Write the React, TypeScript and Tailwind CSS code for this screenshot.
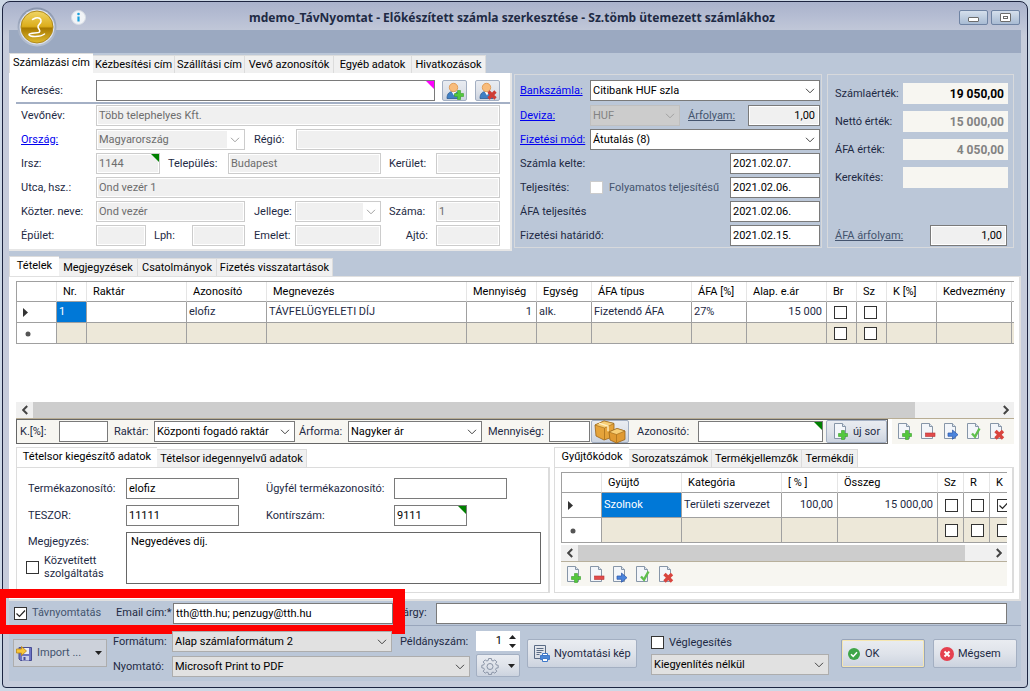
import { useState, type InputHTMLAttributes, type ReactNode } from 'react';
import clsx from 'clsx';

type DocKind = 'plus' | 'minus' | 'arrow' | 'check' | 'cross';

const docActions: { kind: DocKind; title: string }[] = [
  { kind: 'plus', title: 'Új sor' },
  { kind: 'minus', title: 'Sor törlése' },
  { kind: 'arrow', title: 'Másolás' },
  { kind: 'check', title: 'Mentés' },
  { kind: 'cross', title: 'Elvetés' },
];

function DocIcon({ kind }: { kind: DocKind }) {
  return (
    <svg width="16" height="17" viewBox="0 0 16 17" className="shrink-0">
      <path d="M1.500 .5h8l3 3v12h-11z" fill="#f3f6fa" stroke="#8796a8" />
      <path d="M9.500 .5v3h3" fill="#dfe6ee" stroke="#8796a8" />
      {kind === 'plus' && (
        <path d="M8.500 7.500h3v3h3v3h-3v3h-3v-3h-3v-3h3z" fill="#52c83c" stroke="#3aa02b" strokeWidth=".6" />
      )}
      {kind === 'minus' && <rect x="5.500" y="10" width="9.500" height="3.500" fill="#e14b4b" stroke="#b83232" strokeWidth=".6" />}
      {kind === 'arrow' && (
        <path d="M5 10h4.500V7l5.500 4.700-5.500 4.600v-3H5z" fill="#4b84dc" stroke="#2a55a8" strokeWidth=".7" />
      )}
      {kind === 'check' && <path d="M6 10.500l3 3.200L13.500 5.500" fill="none" stroke="#5fbf4d" strokeWidth="2.400" />}
      {kind === 'cross' && (
        <path d="M6.500 8l7.500 7.500M14 8l-7.500 7.500" stroke="#d9443e" strokeWidth="3.400" fill="none" />
      )}
    </svg>
  );
}

function PersonIcon({ kind }: { kind: 'plus' | 'cross' }) {
  return (
    <svg width="18" height="18" viewBox="0 0 18 18">
      <path d="M1 16.500c0-5 2.500-7 6-7s7 2 7 7z" fill="#3f7fc4" stroke="#2b5c96" strokeWidth=".8" />
      <path d="M5.500 9.500l2.500 4 2.500-4z" fill="#fff" />
      <circle cx="7.500" cy="5.500" r="4.200" fill="#f8bc7c" stroke="#e09a52" strokeWidth=".9" />
      {kind === 'plus' ? (
        <path d="M11.500 8.500h3v3h3v3h-3v3h-3v-3h-3v-3h3z" fill="#52c83c" stroke="#3aa02b" strokeWidth=".6" />
      ) : (
        <path d="M9.500 9.500l7 7M16.500 9.500l-7 7" stroke="#cf3b35" strokeWidth="3.200" />
      )}
    </svg>
  );
}

function BoxesIcon() {
  return (
    <svg width="32" height="24" viewBox="0 0 32 24">
      <path d="M1 5l9-4 10 2.500v13L10 20 2 16z" fill="#e5a33a" stroke="#9a6418" strokeWidth=".8" />
      <path d="M1 5l9-4 10 2.500L10.500 8z" fill="#f8cf76" stroke="#9a6418" strokeWidth=".6" />
      <path d="M10.500 8v12" stroke="#b57a22" />
      <path d="M5 3.200l9 3v5" stroke="#fff0c4" strokeWidth="1.400" fill="none" />
      <path d="M15 12l8-3.500 8 2.500v8.500L22.500 23 16 20z" fill="#e09a32" stroke="#9a6418" strokeWidth=".8" />
      <path d="M15 12l8-3.500 8 2.500-8.500 3.500z" fill="#f8cf76" stroke="#9a6418" strokeWidth=".6" />
      <path d="M22.500 14.500V23" stroke="#b57a22" />
    </svg>
  );
}

function ImportIcon() {
  return (
    <svg width="17" height="16" viewBox="0 0 17 16" className="shrink-0">
      <path d="M3 2.500h12.500v13H4.500L3 14z" fill="#6d74c4" stroke="#474c94" />
      <rect x="5.500" y="3" width="7.500" height="6" fill="#e9ecf7" />
      <rect x="6" y="11" width="7" height="4.500" fill="#c9cde8" />
      <rect x="7.500" y="12" width="2" height="3" fill="#474c94" />
      <path d="M.5 4h5V1.500l5 4.500-5 4.500V8h-5z" fill="#f7c53a" stroke="#b98518" strokeWidth=".8" />
    </svg>
  );
}

function PrintPreviewIcon() {
  return (
    <svg width="17" height="17" viewBox="0 0 17 17" fill="none" className="shrink-0">
      <path d="M7 13.500H1.500v-13h11V8" stroke="#5a6b85" />
      <path d="M3.500 3.500h7M3.500 5.500h7M3.500 7.500h5M3.500 9.500h3" stroke="#5a6b85" />
      <path d="M9.500 8.500h5v3h-5z" fill="#fff" stroke="#3f78c9" />
      <path d="M7.500 10.500h9v4h-9z" fill="#4b86d6" stroke="#3f78c9" />
      <path d="M9.500 13.500h5v3h-5z" fill="#fff" stroke="#3f78c9" />
    </svg>
  );
}

function GearIcon() {
  return (
    <svg width="18" height="18" viewBox="0 0 18 18" fill="none" stroke="#8a94a6">
      <path d="M7.600 1.500h2.800l.4 2 1.300.5 1.700-1.100 2 2-1.200 1.700.6 1.300 2 .4v2.500l-2 .4-.6 1.300 1.200 1.700-2 2-1.700-1.100-1.300.5-.4 2H7.600l-.4-2-1.300-.5-1.700 1.100-2-2 1.200-1.700-.6-1.300-2-.4V8.300l2-.4.600-1.300-1.200-1.700 2-2L5.900 4l1.300-.5z" />
      <circle cx="9" cy="9.500" r="3" />
    </svg>
  );
}

function Chevron({ className = 'stroke-[#444]' }: { className?: string }) {
  return (
    <svg width="10" height="6" viewBox="0 0 10 6" fill="none" className={className}>
      <path d="M1 .8l4 4 4-4" />
    </svg>
  );
}

function Caret({ up = false }: { up?: boolean }) {
  return (
    <svg width="7" height="4" viewBox="0 0 7 4">
      <path d={up ? 'M0 4h7L3.500 0z' : 'M0 0h7L3.500 4z'} fill="#222" />
    </svg>
  );
}

function TextBox({
  label,
  className,
  corner,
  ...rest
}: InputHTMLAttributes<HTMLInputElement> & { label?: string; corner?: 'green' | 'magenta' }) {
  const off = rest.disabled;
  return (
    <span className={clsx('relative flex h-[21px] shrink-0', className)}>
      <input
        {...rest}
        aria-label={label}
        className={clsx(
          'h-full w-full min-w-0 border px-0.5 outline-none',
          off ? 'border-[#ccc] bg-[#f0f0f0] text-[#6d6d6d] ring-1 ring-inset ring-white' : 'border-[#7a7a7a] bg-white text-black',
        )}
      />
      {corner && (
        <svg width="8" height="8" viewBox="0 0 8 8" className="absolute top-px right-px">
          <path d="M0 0h8v8z" fill={corner === 'green' ? '#008000' : '#f0f'} />
        </svg>
      )}
    </span>
  );
}

function NumberBox({ id, value }: { id: string; value: string }) {
  return (
    <input
      id={id}
      defaultValue={value}
      className="h-[21px] min-w-0 border border-[#7a7a7a] bg-[#f0f0f0] px-1 text-right text-black ring-1 ring-inset ring-white"
    />
  );
}

function Combo({
  id,
  label,
  value,
  className,
  tone = 'white',
}: {
  id?: string;
  label?: string;
  value: string;
  className?: string;
  tone?: 'white' | 'off' | 'flat' | 'blue';
}) {
  const disabled = tone === 'off' || tone === 'blue';
  return (
    <span className={clsx('relative flex h-[21px] shrink-0', className)}>
      <select
        id={id}
        aria-label={label}
        disabled={disabled}
        className={clsx(
          'h-full w-full appearance-none border pr-5 pl-0.5 outline-none',
          tone === 'white' && 'border-[#7a7a7a] bg-white text-black',
          tone === 'off' && 'border-[#ccc] bg-[#f0f0f0] text-[#6d6d6d] ring-1 ring-inset ring-white',
          tone === 'flat' && 'border-[#adadad] bg-[#e1e1e1] text-black',
          tone === 'blue' && 'border-[#bfbfbf] bg-[#ccc] text-[#838383]',
        )}
      >
        <option>{value}</option>
      </select>
      <span
        className={clsx(
          'pointer-events-none absolute inset-y-0.5 right-0.5 flex w-4 items-center justify-center',
          tone === 'off' && 'bg-white',
        )}
      >
        <Chevron className={disabled ? 'stroke-[#a0a0a0]' : 'stroke-[#444]'} />
      </span>
    </span>
  );
}

function Check({ id, label, checked = false, off = false }: { id?: string; label?: string; checked?: boolean; off?: boolean }) {
  return (
    <span className="relative inline-flex size-[13px] shrink-0">
      <input
        id={id}
        type="checkbox"
        aria-label={label}
        defaultChecked={checked}
        disabled={off}
        className={clsx('peer size-[13px] appearance-none border bg-white', off ? 'border-[#ccc]' : 'border-[#333]')}
      />
      <svg
        viewBox="0 0 13 13"
        className="pointer-events-none absolute inset-0 hidden size-[13px] peer-checked:block"
        fill="none"
        stroke="#222"
      >
        <path d="M2.500 6.500l3 3 5.500-6" strokeWidth="1.200" />
      </svg>
    </span>
  );
}

function Tabs({ items }: { items: { name: string; width: string }[] }) {
  const [active, setActive] = useState(0);
  return (
    <div role="tablist" className="flex h-5 items-end">
      {items.map((tab, i) => (
        <button
          key={tab.name}
          role="tab"
          aria-selected={i === active}
          onClick={() => setActive(i)}
          className={clsx(
            'shrink-0 whitespace-nowrap border-[#dcdcdc] text-center text-black',
            tab.width,
            i === active ? 'h-5 border-t border-l bg-white pb-0.5' : 'h-[18px] border-t border-r bg-[#f0f0f0]',
          )}
        >
          {tab.name}
        </button>
      ))}
    </div>
  );
}

function SoftButton({ className, title, children }: { className?: string; title?: string; children: ReactNode }) {
  return (
    <button
      title={title}
      className={clsx(
        'flex shrink-0 items-center rounded-[2px] border border-[#a3afc2] bg-linear-to-b from-[#e9ecf1] via-[#dfe3ea] to-[#ccd3df]',
        className,
      )}
    >
      {children}
    </button>
  );
}

function ScrollBar({ thumb }: { thumb: string }) {
  return (
    <div className="flex h-4 shrink-0 bg-[#f0f0f0]">
      <button aria-label="Balra" className="flex w-[17px] items-center justify-center">
        <Chevron className="rotate-90 stroke-[#444] stroke-2" />
      </button>
      <div className="flex-1">
        <div className={clsx('h-full bg-[#cdcdcd]', thumb)} />
      </div>
      <button aria-label="Jobbra" className="flex w-[17px] items-center justify-center">
        <Chevron className="-rotate-90 stroke-[#444] stroke-2" />
      </button>
    </div>
  );
}

function RowMark({ kind }: { kind: 'current' | 'new' }) {
  return (
    <svg width="10" height="9" viewBox="0 0 10 9" className="ml-1 block">
      {kind === 'current' ? <path d="M2 0l5 4.500L2 9z" fill="#333" /> : <circle cx="7" cy="5" r="2.500" fill="#555" />}
    </svg>
  );
}

interface Column {
  name: string;
  width?: string;
  value: string;
  right?: boolean;
  selected?: boolean;
  check?: boolean;
  checked?: boolean;
}

const itemColumns: Column[] = [
  { name: 'Nr.', width: 'w-[30px]', value: '1', selected: true },
  { name: 'Raktár', width: 'w-[100px]', value: '' },
  { name: 'Azonosító', width: 'w-[80px]', value: 'elofiz' },
  { name: 'Megnevezés', value: 'TÁVFELÜGYELETI DÍJ' },
  { name: 'Mennyiség', width: 'w-[70px]', value: '1', right: true },
  { name: 'Egység', width: 'w-[55px]', value: 'alk.' },
  { name: 'ÁFA típus', width: 'w-[100px]', value: 'Fizetendő ÁFA' },
  { name: 'ÁFA [%]', width: 'w-[55px]', value: '27%' },
  { name: 'Alap. e.ár', width: 'w-[80px]', value: '15 000', right: true },
  { name: 'Br', width: 'w-[30px]', value: '', check: true },
  { name: 'Sz', width: 'w-[30px]', value: '', check: true },
  { name: 'K [%]', width: 'w-[50px]', value: '' },
  { name: 'Kedvezmény', width: 'w-[75px]', value: '' },
  { name: '', width: 'w-[2px]', value: '' },
];

const codeColumns: Column[] = [
  { name: 'Gyüjtő', width: 'w-[80px]', value: 'Szolnok', selected: true },
  { name: 'Kategória', value: 'Területi szervezet' },
  { name: '[ % ]', width: 'w-[56px]', value: '100,00', right: true },
  { name: 'Összeg', width: 'w-[100px]', value: '15 000,00', right: true },
  { name: 'Sz', width: 'w-[26px]', value: '', check: true },
  { name: 'R', width: 'w-[26px]', value: '', check: true },
  { name: 'K', width: 'w-[17px]', value: '', check: true, checked: true },
];

function Grid({ columns, rowHeight }: { columns: Column[]; rowHeight: string }) {
  const line = 'border-r border-b border-[#a0a0a0] p-0';
  return (
    <table className="w-full table-fixed border-separate border-spacing-0 border-t border-l border-[#a0a0a0]">
      <thead>
        <tr className="h-5">
          <th className="w-10 border-r border-b border-r-[#e5e5e5] border-b-[#a0a0a0] p-0" />
          {columns.map((c) => (
            <th
              key={c.name}
              className={clsx(
                'overflow-hidden border-r border-b border-r-[#e5e5e5] border-b-[#a0a0a0] p-0 text-left font-normal whitespace-nowrap text-black last:border-r-0',
                c.width,
              )}
            >
              <span className="pl-1.5">{c.name}</span>
            </th>
          ))}
        </tr>
      </thead>
      <tbody>
        <tr className={rowHeight}>
          <td className={line}>
            <RowMark kind="current" />
          </td>
          {columns.map((c) => (
            <td
              key={c.name}
              className={clsx(
                line,
                'overflow-hidden whitespace-nowrap last:border-r-0',
                c.right && 'text-right',
                c.selected && 'bg-[#0078d7] text-white',
              )}
            >
              {c.check ? (
                <span className="flex pl-[7px]">
                  <Check label={c.name} checked={c.checked} />
                </span>
              ) : (
                <span className="pr-1 pl-0.5">{c.value}</span>
              )}
            </td>
          ))}
        </tr>
        <tr className={rowHeight}>
          <td className={line}>
            <RowMark kind="new" />
          </td>
          {columns.map((c) => (
            <td key={c.name} className={clsx(line, 'overflow-hidden bg-[#ede8d9] last:border-r-0')}>
              {c.check && (
                <span className="flex pl-[7px]">
                  <Check label={c.name} />
                </span>
              )}
            </td>
          ))}
        </tr>
      </tbody>
    </table>
  );
}

function TitleBar() {
  return (
    <header className="relative h-[51px]">
      <div className="flex h-7 items-center justify-end gap-[3px] pt-[3px] pr-px">
        <h1 className="flex-1 pl-[59px] text-center font-['Noto_Sans'] text-[12px] font-bold text-[#1e2a44]">
          mdemo_TávNyomtat - Előkészített számla szerkesztése - Sz.tömb ütemezett számlákhoz
        </h1>
        <button
          aria-label="Kis méret"
          className="flex h-[15px] w-[29px] items-center justify-center rounded-[2px] border border-[#6f83a3] bg-linear-to-b from-[#d5dfec] to-[#a8bbd3]"
        >
          <span className="mt-1 h-[5px] w-[11px] rounded-[1px] border border-[#6c6c6c] bg-white" />
        </button>
        <button
          aria-label="Teljes méret"
          className="flex h-[15px] w-[29px] items-center justify-center rounded-[2px] border border-[#6f83a3] bg-linear-to-b from-[#d5dfec] to-[#a8bbd3]"
        >
          <span className="flex h-[9px] w-[11px] items-center justify-center rounded-[1px] border border-[#6c6c6c] bg-white">
            <span className="h-[3px] w-[5px] border border-[#6c6c6c]" />
          </span>
        </button>
      </div>
      <div className="h-[23px] bg-[#9ba9c1]" />
      {/* app menu badge */}
      <svg width="40" height="40" viewBox="0 0 40 40" className="absolute top-[5px] left-2">
        <defs>
          <linearGradient id="ring" x1="0" y1="0" x2="0" y2="1">
            <stop offset="0" stopColor="#8894ac" />
            <stop offset="1" stopColor="#b9c3d4" />
          </linearGradient>
          <linearGradient id="gold" x1="0" y1="0" x2="0" y2="1">
            <stop offset="0" stopColor="#f0d566" />
            <stop offset=".48" stopColor="#dcae1c" />
            <stop offset=".54" stopColor="#a87a00" />
            <stop offset="1" stopColor="#e0bb30" />
          </linearGradient>
        </defs>
        <circle cx="20" cy="20" r="19.500" fill="url(#ring)" />
        <circle cx="20" cy="20" r="17.500" fill="#dfe4ee" />
        <circle cx="20" cy="20" r="16" fill="url(#gold)" stroke="#b08a1c" />
        <path
          d="M15.500 12.500l3-1.500c3-1 6 .5 5.500 3.500-.5 2.500-3.500 3.500-3 5.500.5 2.500 3 3.500 1.500 5s-10 .3-10.500 2.500c-.4 2.600 11.500 2.800 15.500-.5"
          fill="none"
          stroke="#fff"
          strokeWidth="1.500"
          strokeLinecap="round"
        />
      </svg>
      <svg width="15" height="15" viewBox="0 0 15 15" className="absolute top-2 left-[62px]">
        <circle cx="7.500" cy="7.500" r="7" fill="#f2f4f7" stroke="#d7dce4" />
        <circle cx="7.500" cy="4" r="1.300" fill="#1aa0dc" />
        <path d="M7.500 6.500v5" stroke="#1aa0dc" strokeWidth="2.200" />
      </svg>
    </header>
  );
}

function BillingPanel() {
  return (
    <section className="w-[503px] shrink-0">
      <Tabs
        items={[
          { name: 'Számlázási cím', width: 'w-[84px]' },
          { name: 'Kézbesítési cím', width: 'w-[82px]' },
          { name: 'Szállítási cím', width: 'w-[70px]' },
          { name: 'Vevő azonosítók', width: 'w-[89px]' },
          { name: 'Egyéb adatok', width: 'w-[78px]' },
          { name: 'Hivatkozások', width: 'w-[74px]' },
        ]}
      />
      <div className="border-r-2 border-b-2 border-[#e6e6e6] bg-white pt-[7px] pb-[3px]">
        <div className="flex h-[21px] items-center pl-3">
          <label htmlFor="search" className="w-[75px]">Keresés:</label>
          <TextBox id="search" corner="magenta" className="w-[339px]" />
          <SoftButton title="Új vevő" className="ml-[7px] h-[21px] w-[25px] justify-center">
            <PersonIcon kind="plus" />
          </SoftButton>
          <SoftButton title="Vevő törlése" className="ml-2 h-[21px] w-[25px] justify-center">
            <PersonIcon kind="cross" />
          </SoftButton>
        </div>
        <div className="mt-px mb-px ml-[7px] h-0.5 bg-[#a4b0c5]" />
        <div className="flex flex-col gap-[3px] pr-[10px] pl-3 *:flex *:items-center">
          <div>
            <label htmlFor="name" className="w-[75px]">Vevőnév:</label>
            <TextBox id="name" disabled defaultValue="Több telephelyes Kft." className="flex-1" />
          </div>
          <div>
            <a href="#orszag" className="w-[75px] text-[#0000f0] underline">Ország:</a>
            <Combo label="Ország" tone="off" value="Magyarország" className="w-[149px]" />
            <label htmlFor="region" className="w-[51px] pl-[9px]">Régió:</label>
            <TextBox id="region" disabled className="flex-1" />
          </div>
          <div>
            <label htmlFor="zip" className="w-[75px]">Irsz:</label>
            <TextBox id="zip" disabled defaultValue="1144" corner="green" className="w-16" />
            <label htmlFor="city" className="w-[68px] pl-2">Település:</label>
            <TextBox id="city" disabled defaultValue="Budapest" className="w-[153px]" />
            <label htmlFor="district" className="flex-1 pl-2">Kerület:</label>
            <TextBox id="district" disabled className="w-16" />
          </div>
          <div>
            <label htmlFor="street" className="w-[75px]">Utca, hsz.:</label>
            <TextBox id="street" disabled defaultValue="Ond vezér 1" className="flex-1" />
          </div>
          <div>
            <label htmlFor="area" className="w-[75px]">Közter. neve:</label>
            <TextBox id="area" disabled defaultValue="Ond vezér" className="w-[149px]" />
            <label htmlFor="areaType" className="w-[50px] pl-[9px]">Jellege:</label>
            <Combo id="areaType" tone="off" value="" className="w-[86px]" />
            <label htmlFor="houseNo" className="flex-1 pl-2">Száma:</label>
            <TextBox id="houseNo" disabled defaultValue="1" className="w-16" />
          </div>
          <div>
            <label htmlFor="building" className="w-[75px]">Épület:</label>
            <TextBox id="building" disabled className="w-[50px]" />
            <label htmlFor="stair" className="w-[46px] pl-2">Lph:</label>
            <TextBox id="stair" disabled className="w-[53px]" />
            <label htmlFor="floor" className="w-[50px] pl-[9px]">Emelet:</label>
            <TextBox id="floor" disabled className="w-[86px]" />
            <label htmlFor="door" className="flex-1 pr-2 text-right">Ajtó:</label>
            <TextBox id="door" disabled className="w-16" />
          </div>
        </div>
      </div>
    </section>
  );
}

function PaymentPanel() {
  const dates = [
    { id: 'issued', label: 'Számla kelte:', value: '2021.02.07.' },
    { id: 'fulfilled', label: 'Teljesítés:', value: '2021.02.06.' },
    { id: 'vatDate', label: 'ÁFA teljesítés', value: '2021.02.06.' },
    { id: 'due', label: 'Fizetési határidő:', value: '2021.02.15.' },
  ];
  return (
    <section className="mt-[21px] ml-0.5 flex w-[308px] shrink-0 flex-col gap-[3px] self-start border border-[#d7d9dc] pt-[5px] pr-px pb-px pl-[5px] *:flex *:items-center">
      <div className="mb-px">
        <a href="#bank" className="w-[70px] text-[#0000f0] underline">Bankszámla:</a>
        <Combo label="Bankszámla" value="Citibank HUF szla" className="flex-1" />
      </div>
      <div>
        <a href="#deviza" className="w-[70px] text-[#0000f0] underline">Deviza:</a>
        <Combo label="Deviza" tone="blue" value="HUF" className="w-[90px]" />
        <label htmlFor="rate" className="w-[68px] pl-2 text-[#44546e] underline">Árfolyam:</label>
        <span className="flex flex-1 *:w-full">
          <NumberBox id="rate" value="1,00" />
        </span>
      </div>
      <div>
        <a href="#mod" className="w-[70px] text-[#0000f0] underline">Fizetési mód:</a>
        <Combo label="Fizetési mód" value="Átutalás (8)" className="flex-1" />
      </div>
      {dates.map((d) => (
        <div key={d.id}>
          <label htmlFor={d.id} className={d.id === 'fulfilled' ? 'w-[70px]' : 'flex-1'}>
            {d.label}
          </label>
          {d.id === 'fulfilled' && (
            <span className="flex flex-1 items-center gap-1.5">
              <Check id="continuous" off />
              <label htmlFor="continuous" className="whitespace-nowrap text-[#44546e]">Folyamatos teljesítésű</label>
            </span>
          )}
          <TextBox id={d.id} defaultValue={d.value} className="w-[90px]" />
        </div>
      ))}
    </section>
  );
}

function TotalsPanel() {
  const totals = [
    { id: 'total', label: 'Számlaérték:', value: '19 050,00', tone: 'text-black' },
    { id: 'net', label: 'Nettó érték:', value: '15 000,00', tone: 'text-[#838383]' },
    { id: 'vat', label: 'ÁFA érték:', value: '4 050,00', tone: 'text-[#838383]' },
    { id: 'round', label: 'Kerekítés:', value: '', tone: 'text-[#838383]' },
  ];
  return (
    <section className="mt-[21px] mr-[7px] mb-[3px] ml-[5px] flex min-w-0 flex-1 flex-col self-stretch border border-[#d7d9dc] pt-2 pr-[5px] pb-px pl-[7px]">
      <div className="flex flex-col gap-[7px]">
        {totals.map((t) => (
          <div key={t.id} className="flex items-center">
            <label htmlFor={t.id} className="w-[68px] shrink-0 whitespace-nowrap">{t.label}</label>
            <input
              id={t.id}
              readOnly
              defaultValue={t.value}
              className={clsx('h-[21px] w-full min-w-0 bg-[#f7f6f1] px-1 text-right text-[12px] font-bold', t.tone)}
            />
          </div>
        ))}
      </div>
      <div className="mt-auto flex items-center pr-px">
        <label htmlFor="vatRate" className="flex-1 text-[#44546e] underline">ÁFA árfolyam:</label>
        <span className="flex w-[77px] *:w-full">
          <NumberBox id="vatRate" value="1,00" />
        </span>
      </div>
    </section>
  );
}

function RowEntryBar() {
  return (
    <div className="flex h-[26px] shrink-0 items-stretch gap-1 border-t border-[#b8ad94]">
      <div className="flex flex-1 items-center border border-[#666] bg-[#f7f6f1] pl-[3px]">
        <label htmlFor="discount" className="w-[39px]">K.[%]:</label>
        <TextBox id="discount" className="w-[49px]" />
        <label htmlFor="store" className="w-[46px] pl-1.5">Raktár:</label>
        <Combo id="store" value="Központi fogadó raktár" className="w-[141px]" />
        <label htmlFor="priceType" className="w-[53px] pl-1">Árforma:</label>
        <Combo id="priceType" value="Nagyker ár" className="w-[134px]" />
        <label htmlFor="qty" className="w-[67px] pl-1.5">Mennyiség:</label>
        <TextBox id="qty" className="w-[41px]" />
        <SoftButton title="Termékek" className="ml-px h-[23px] w-[38px] justify-center">
          <BoxesIcon />
        </SoftButton>
        <label htmlFor="itemCode" className="w-[69px] pl-2">Azonosító:</label>
        <TextBox id="itemCode" corner="green" className="w-[125px]" />
        <SoftButton className="ml-[3px] h-[23px] min-w-0 flex-1 gap-1 pl-1.5 whitespace-nowrap">
          <DocIcon kind="plus" />
          új sor
        </SoftButton>
      </div>
      <div className="flex w-[122px] items-center gap-[7px] bg-[#f7f6f1] pl-[5px]">
        {docActions.map((a) => (
          <button key={a.kind} title={a.title}>
            <DocIcon kind={a.kind} />
          </button>
        ))}
      </div>
    </div>
  );
}

function ItemDetails() {
  return (
    <section className="flex w-[534px] shrink-0 flex-col">
      <Tabs
        items={[
          { name: 'Tételsor kiegészítő adatok', width: 'w-[141px]' },
          { name: 'Tételsor idegennyelvű adatok', width: 'w-[150px]' },
        ]}
      />
      <div className="flex flex-1 flex-col gap-1.5 border border-r-2 border-[#dcdcdc] pt-[10px] pr-[7px] pl-[11px]">
        <div className="flex items-center">
          <label htmlFor="product" className="w-[98px]">Termékazonosító:</label>
          <TextBox id="product" defaultValue="elofiz" className="w-[113px]" />
          <label htmlFor="clientProduct" className="w-[155px] pl-[27px]">Ügyfél termékazonosító:</label>
          <TextBox id="clientProduct" className="w-[113px]" />
        </div>
        <div className="flex items-center">
          <label htmlFor="teszor" className="w-[98px]">TESZOR:</label>
          <TextBox id="teszor" defaultValue="11111" className="w-[113px]" />
          <label htmlFor="ledger" className="w-[155px] pl-[27px]">Kontírszám:</label>
          <TextBox id="ledger" defaultValue="9111" corner="green" className="w-[73px]" />
        </div>
        <div className="flex">
          <div className="w-[98px]">
            <label htmlFor="note" className="mt-[3px] block">Megjegyzés:</label>
            <div className="mt-[5px] -ml-0.5 flex items-center gap-[5px]">
              <Check id="mediated" />
              <label htmlFor="mediated" className="leading-[13px]">
                Közvetített
                <br />
                szolgáltatás
              </label>
            </div>
          </div>
          <textarea
            id="note"
            defaultValue="Negyedéves díj."
            className="h-[52px] flex-1 resize-none border border-[#666] bg-white px-1 py-0.5 text-black"
          />
        </div>
      </div>
    </section>
  );
}

function CollectCodes() {
  return (
    <section className="ml-1 flex min-w-0 flex-1 flex-col">
      <Tabs
        items={[
          { name: 'Gyűjtőkódok', width: 'w-[75px]' },
          { name: 'Sorozatszámok', width: 'w-[83px]' },
          { name: 'Termékjellemzők', width: 'w-[90px]' },
          { name: 'Termékdíj', width: 'w-[56px]' },
        ]}
      />
      <div className="flex-1 border border-r-2 border-[#dcdcdc] pt-1 pr-[5px] pl-1.5">
        <div className="h-[73px] overflow-hidden">
          <Grid columns={codeColumns} rowHeight="h-[25px]" />
        </div>
        <ScrollBar thumb="w-[94%]" />
        <div className="flex h-[25px] items-center gap-[7px] border-t border-[#b8b09c] bg-[#f7f6f1] pl-[5px]">
          {docActions.map((a) => (
            <button key={a.kind} title={a.title}>
              <DocIcon kind={a.kind} />
            </button>
          ))}
        </div>
      </div>
    </section>
  );
}

function ItemsPanel() {
  return (
    <section className="mt-[5px] flex flex-1 flex-col">
      <Tabs
        items={[
          { name: 'Tételek', width: 'w-[50px]' },
          { name: 'Megjegyzések', width: 'w-[79px]' },
          { name: 'Csatolmányok', width: 'w-[79px]' },
          { name: 'Fizetés visszatartások', width: 'w-[116px]' },
        ]}
      />
      <div className="flex flex-1 flex-col border-t border-r-2 border-b-2 border-[#e0e0e0] bg-white pt-1 pr-[5px] pb-1.5 pl-[7px]">
        <div className="min-h-20 flex-1">
          <Grid columns={itemColumns} rowHeight="h-[21px]" />
        </div>
        <ScrollBar thumb="w-[91.5%]" />
        <RowEntryBar />
        <div className="mt-[3px] flex min-h-[146px] shrink-0">
          <ItemDetails />
          <CollectCodes />
        </div>
      </div>
    </section>
  );
}

function MailBar() {
  return (
    <div className="relative flex h-[25px] items-center border-b border-[#98a5bb] pr-3.5 pl-[5px]">
      <Check id="remote" checked />
      <label htmlFor="remote" className="w-[89px] pl-[5px] text-[#44546e]">Távnyomtatás</label>
      <label htmlFor="email" className="w-[57px]">Email cím:*</label>
      <TextBox id="email" defaultValue="tth@tth.hu; penzugy@tth.hu" className="w-[220px]" />
      <label htmlFor="subject" className="w-[43px] pl-1">Tárgy:</label>
      <TextBox id="subject" className="flex-1" />
      {/* highlight frame */}
      <div className="pointer-events-none absolute -top-3 -left-[9px] h-[45px] w-[405px] border-t-[9px] border-r-[12px] border-b-[9px] border-l-[6px] border-[#f00]" />
    </div>
  );
}

function ActionBar() {
  return (
    <footer className="flex h-[55px] items-start pt-[5px] pr-1 pl-1">
      <button className="mt-2 flex h-7 w-[94px] shrink-0 items-center border border-[#adadad] bg-[#ccd1da] pl-0.5 text-[#44546e]">
        <ImportIcon />
        <span className="flex-1 pl-1 text-left">Import ...</span>
        <span className="pr-1">
          <Caret />
        </span>
      </button>
      <div className="ml-1.5 flex flex-col gap-1 *:flex *:items-center">
        <div>
          <label htmlFor="format" className="w-[59px]">Formátum:</label>
          <Combo id="format" tone="flat" value="Alap számlaformátum 2" className="w-[220px]" />
          <label htmlFor="copies" className="pl-2">Példányszám:</label>
        </div>
        <div>
          <label htmlFor="printer" className="w-[59px]">Nyomtató:</label>
          <Combo id="printer" tone="flat" value="Microsoft Print to PDF" className="w-[298px]" />
        </div>
      </div>
      <div className="ml-1.5 flex w-11 flex-col gap-[3px]">
        <div className="flex h-5 bg-white">
          <input id="copies" defaultValue="1" className="w-7 pr-0.5 text-right text-black outline-none" />
          <div className="flex flex-1 flex-col items-center justify-center gap-[5px]">
            <button aria-label="Növelés"><Caret up /></button>
            <button aria-label="Csökkentés"><Caret /></button>
          </div>
        </div>
        <SoftButton title="Beállítások" className="h-[23px] justify-between px-1">
          <GearIcon />
          <Caret />
        </SoftButton>
      </div>
      <SoftButton className="mt-2 ml-[7px] h-[29px] w-[110px] gap-1 pl-[5px] whitespace-nowrap">
        <PrintPreviewIcon />
        Nyomtatási kép
      </SoftButton>
      <div className="ml-3.5 flex w-[178px] flex-col">
        <div className="flex h-[23px] items-center gap-[5px]">
          <Check id="final" />
          <label htmlFor="final">Véglegesítés</label>
        </div>
        <Combo label="Kiegyenlítés" tone="flat" value="Kiegyenlítés nélkül" className="w-full" />
      </div>
      <div className="mt-2 ml-auto flex gap-2">
        <button className="flex h-[29px] w-21 items-center gap-[5px] rounded-[2px] border border-[#98a5bb] bg-linear-to-b from-[#e9ecf1] via-[#dfe3ea] to-[#ccd3df] pl-[6px] ring-1 ring-inset ring-[#f5e6b0]">
          <svg width="12" height="12" viewBox="0 0 12 12">
            <circle cx="6" cy="6" r="6" fill="#3fa548" />
            <path d="M3 6.200l2.200 2.200L9 4.300" fill="none" stroke="#fff" strokeWidth="1.500" />
          </svg>
          OK
        </button>
        <SoftButton className="h-[29px] w-21 gap-1 pl-[6px]">
          <svg width="14" height="14" viewBox="0 0 14 14">
            <circle cx="7" cy="7" r="7" fill="#e5404f" />
            <path d="M4.500 4.500l5 5M9.500 4.500l-5 5" stroke="#fff" strokeWidth="2" />
          </svg>
          Mégsem
        </SoftButton>
      </div>
    </footer>
  );
}

export default function App() {
  return (
    <div className="flex min-h-screen flex-col bg-[#cdd8e6] px-0.5 pt-px pb-[3px] font-[Roboto,'Noto_Sans',sans-serif] text-[11px] leading-[14px] text-[#1e2a44]">
      <div className="flex flex-1 flex-col rounded-t-lg rounded-b border border-[#1c2440] bg-linear-to-b from-[#a9b2cc] to-[#c6ccdb] to-5% px-1.5 pb-1.5">
        <TitleBar />
        <main className="flex flex-1 flex-col bg-[#bbc7d8]">
          <div className="flex items-start">
            <BillingPanel />
            <PaymentPanel />
            <TotalsPanel />
          </div>
          <ItemsPanel />
          <MailBar />
          <ActionBar />
        </main>
      </div>
    </div>
  );
}
